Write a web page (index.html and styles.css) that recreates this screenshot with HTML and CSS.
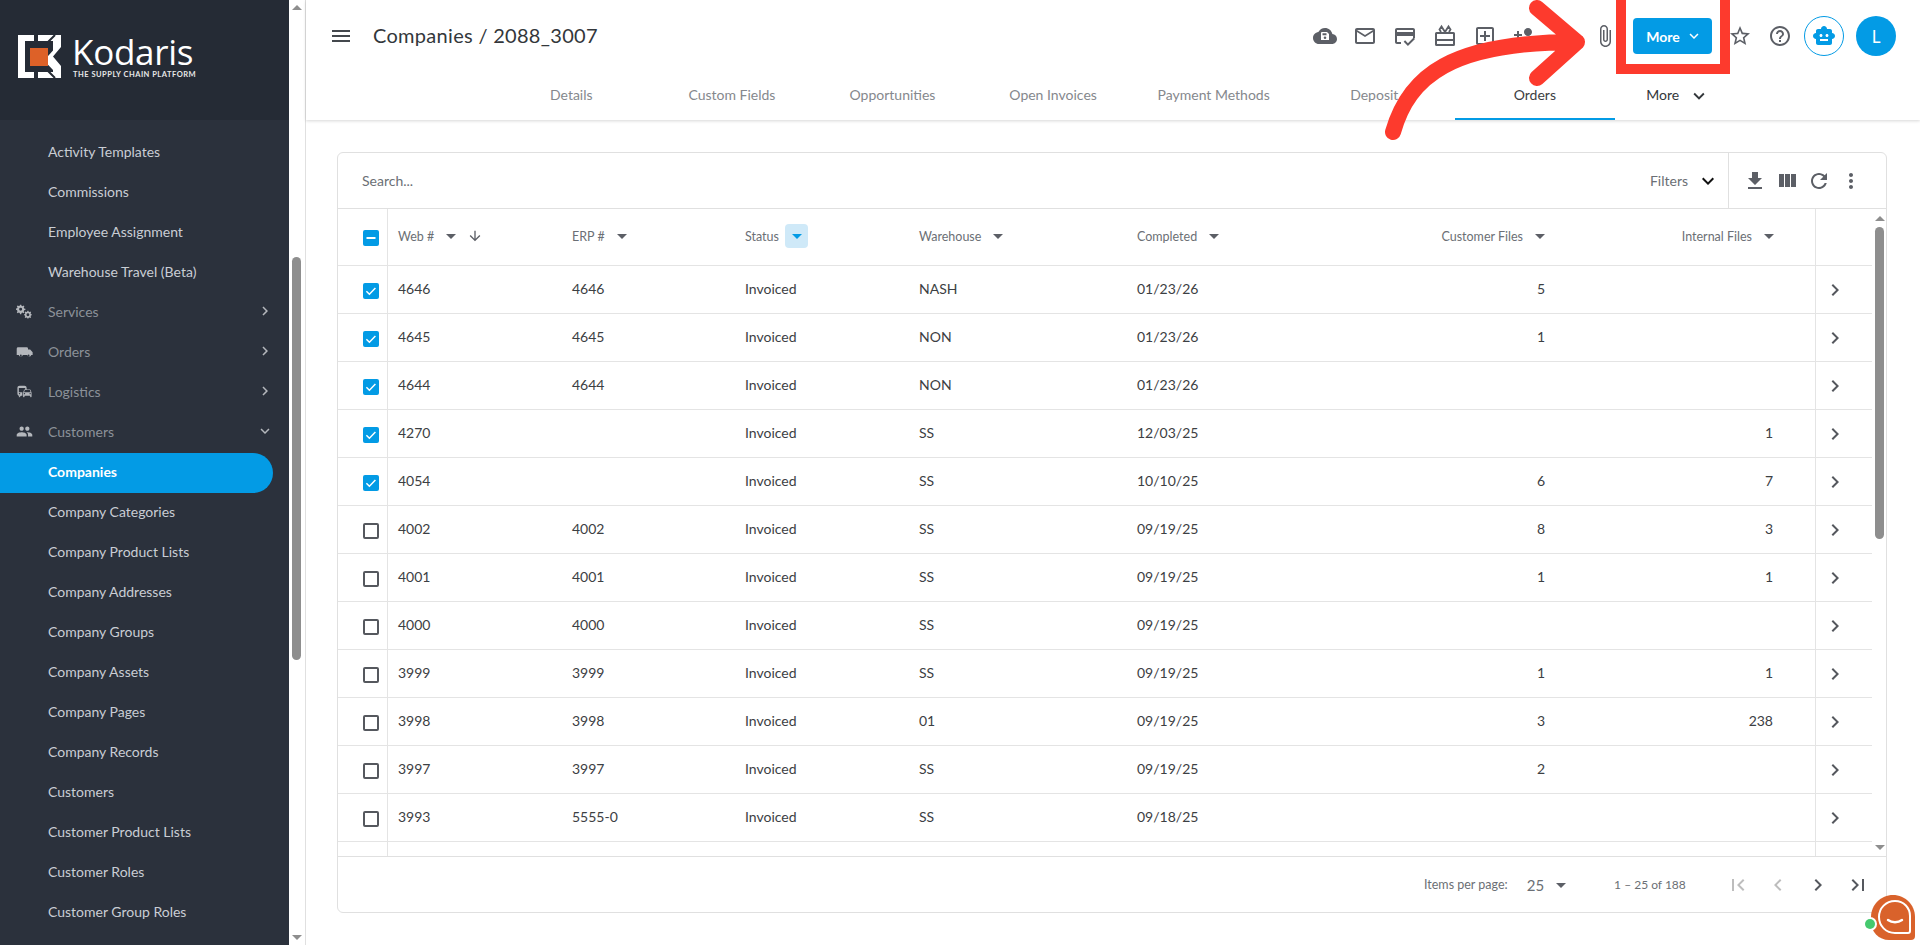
FILE: index.html
```html
<!DOCTYPE html>
<html lang="en">
<head>
    <meta charset="UTF-8">
    <meta name="viewport" content="width=device-width, initial-scale=1.0">
    <title>Companies / 2088_3007</title>
    <link rel="stylesheet" href="styles.css">
</head>
<body>
    <svg class="defs" width="0" height="0">
        <symbol id="i-right" viewBox="0 0 24 24"><path d="M10 6L8.59 7.41 13.17 12l-4.58 4.59L10 18l6-6z"/></symbol>
        <symbol id="i-down" viewBox="0 0 24 24"><path d="M16.59 8.59L12 13.17 7.41 8.59 6 10l6 6 6-6z"/></symbol>
        <symbol id="i-drop" viewBox="0 0 24 24"><path d="M7 10l5 5 5-5z"/></symbol>
        <symbol id="i-check" viewBox="0 0 16 16"><rect width="16" height="16" rx="2"/><path d="M3.4 8.2l3 3 6-6.2" fill="none" stroke="#fff" stroke-width="1.5"/></symbol>
    </svg>

    <div class="container">
        <div class="sidebar">
            <div class="logo">
                <svg class="logo-mark" viewBox="0 0 43 43">
                    <path fill="#fff" d="M0 0h16v6H7v31h9v6H0z"/>
                    <path fill="#fff" d="M20 0h23v12l-8 9.500 8 9.500v12H20v-6h15v-2l-9-9.500 9-10V6H20z"/>
                    <path fill="none" stroke="#252b35" stroke-width="2" d="M37 0l-7 7M37 43l-7-7"/>
                    <rect x="12" y="13" width="18" height="18" fill="#dd6128"/>
                </svg>
                <div class="logo-text">
                    <div class="logo-name">Kodaris</div>
                    <div class="logo-tag">THE SUPPLY CHAIN PLATFORM</div>
                </div>
            </div>
            <ul class="nav">
                <li class="nav-item">Activity Templates</li>
                <li class="nav-item">Commissions</li>
                <li class="nav-item">Employee Assignment</li>
                <li class="nav-item">Warehouse Travel (Beta)</li>
                <li class="nav-item nav-group">
                    <svg class="nav-icon" viewBox="0 0 24 24"><path d="M9.5 3l.5 2.2 1.6.7 2-1.2 1.6 1.6-1.2 2 .7 1.6 2.300.6v2.200l-2.300.5-.7 1.700 1.200 2-1.600 1.600-2-1.200-1.600.7-.5 2.200H7.300l-.5-2.200-1.700-.7-2 1.200-1.600-1.600 1.200-2-.7-1.700L0 12.300v-2.200l2-.6.7-1.600-1.200-2 1.600-1.600 2 1.200 1.700-.7L7.300 3zm-1.100 5.500a2.700 2.700 0 100 5.400 2.700 2.700 0 000-5.400z" transform="scale(.78)"/><path d="M18 13l.4 1.500 1.200.5 1.300-.8 1.200 1.200-.8 1.300.5 1.200 1.200.4v1.600l-1.200.4-.5 1.200.8 1.300-1.200 1.200-1.300-.8-1.200.5-.4 1.200h-1.600l-.4-1.200-1.200-.5-1.300.8-1.200-1.200.8-1.300-.5-1.200-1.200-.4v-1.600l1.200-.4.5-1.200-.8-1.300 1.200-1.200 1.300.8 1.200-.5.400-1.500zm-.8 4a2.200 2.200 0 100 4.400 2.200 2.200 0 000-4.400z" transform="translate(1 -1) scale(.92)"/></svg>
                    <span class="nav-label">Services</span>
                    <svg class="nav-arrow"><use href="#i-right"/></svg>
                </li>
                <li class="nav-item nav-group">
                    <svg class="nav-icon" viewBox="0 0 24 24"><path d="M3 6h12a2 2 0 012 2v1h3l3.500 4v4h-2a3 3 0 01-5.800 0H9.700a3 3 0 01-5.800 0H1V8a2 2 0 012-2zm3.800 12.800a1.300 1.300 0 100-2.600 1.300 1.300 0 000 2.600zm11 0a1.300 1.300 0 100-2.600 1.300 1.300 0 000 2.600z"/></svg>
                    <span class="nav-label">Orders</span>
                    <svg class="nav-arrow"><use href="#i-right"/></svg>
                </li>
                <li class="nav-item nav-group">
                    <svg class="nav-icon" viewBox="0 0 24 24"><path d="M12 4H5C3.340 4 2 5.340 2 7v8c0 1.660 1.340 3 3 3l-1 1v1h1l2-2h2v-5H4V6.990L13 7v2h2V7c0-1.660-1.340-3-3-3zM5 14c.55 0 1 .45 1 1s-.45 1-1 1-1-.45-1-1 .45-1 1-1zm15.570-4.340c-.14-.4-.52-.66-.97-.66h-7.190c-.46 0-.83.26-.98.66L10 13.770l.01 5.510c0 .38.31.72.69.72h.62c.38 0 .68-.38.68-.76V18h8v1.240c0 .38.31.76.69.76h.61c.38 0 .69-.34.69-.72l.01-1.370v-4.140l-1.430-4.070zm-8.160.34h7.190l1.030 3h-9.250l1.030-3zM12 16c-.55 0-1-.45-1-1s.45-1 1-1 1 .45 1 1-.45 1-1 1zm8 0c-.55 0-1-.45-1-1s.45-1 1-1 1 .45 1 1-.45 1-1 1z"/></svg>
                    <span class="nav-label">Logistics</span>
                    <svg class="nav-arrow"><use href="#i-right"/></svg>
                </li>
                <li class="nav-item nav-group">
                    <svg class="nav-icon" viewBox="0 0 24 24"><path d="M16 11c1.660 0 2.990-1.340 2.990-3S17.660 5 16 5c-1.660 0-3 1.340-3 3s1.340 3 3 3zm-8 0c1.660 0 2.990-1.340 2.990-3S9.660 5 8 5C6.340 5 5 6.340 5 8s1.340 3 3 3zm0 2c-2.330 0-7 1.170-7 3.500V19h14v-2.500c0-2.330-4.670-3.500-7-3.500zm8 0c-.29 0-.62.02-.97.05 1.160.84 1.970 1.970 1.970 3.450V19h6v-2.500c0-2.330-4.670-3.500-7-3.500z"/></svg>
                    <span class="nav-label">Customers</span>
                    <svg class="nav-arrow"><use href="#i-down"/></svg>
                </li>
                <li class="nav-item active">Companies</li>
                <li class="nav-item">Company Categories</li>
                <li class="nav-item">Company Product Lists</li>
                <li class="nav-item">Company Addresses</li>
                <li class="nav-item">Company Groups</li>
                <li class="nav-item">Company Assets</li>
                <li class="nav-item">Company Pages</li>
                <li class="nav-item">Company Records</li>
                <li class="nav-item">Customers</li>
                <li class="nav-item">Customer Product Lists</li>
                <li class="nav-item">Customer Roles</li>
                <li class="nav-item">Customer Group Roles</li>
            </ul>
        </div>

        <div class="side-scroll">
            <span class="tri tri-up"></span>
            <div class="side-track"><div class="side-thumb"></div></div>
            <span class="tri tri-down"></span>
        </div>

        <div class="main">
            <div class="header">
                <div class="topbar">
                    <svg class="menu-icon" viewBox="0 0 24 24"><path d="M3 18h18v-2H3v2zm0-5h18v-2H3v2zm0-7v2h18V6H3z"/></svg>
                    <h1 class="title">Companies / 2088_3007</h1>
                    <div class="actions">
                        <span class="action"><svg viewBox="0 0 24 24"><path d="M19.350 10.040C18.670 6.590 15.640 4 12 4 9.110 4 6.600 5.640 5.350 8.040 2.340 8.360 0 10.910 0 14c0 3.310 2.690 6 6 6h13c2.760 0 5-2.240 5-5 0-2.640-2.050-4.780-4.650-4.960z"/><path fill="#fff" d="M9 8h5l2 2v6H8V9a1 1 0 011-1zm.5 1.300v2h4v-2zM12 12.500a1.300 1.300 0 100 2.600 1.300 1.300 0 000-2.600z"/></svg></span>
                        <span class="action"><svg viewBox="0 0 24 24"><path d="M20 4H4c-1.100 0-2 .9-2 2v12c0 1.100.9 2 2 2h16c1.100 0 2-.9 2-2V6c0-1.100-.9-2-2-2zm0 14H4V8l8 5 8-5v10zm-8-7L4 6h16l-8 5z"/></svg></span>
                        <span class="action"><svg viewBox="0 0 24 24"><path d="M20 4H4c-1.110 0-2 .89-2 2v12c0 1.110.89 2 2 2h4v-2H4v-6h16v2h2V6c0-1.110-.89-2-2-2zm0 4H4V6h16v2zm-5.070 11.170l-2.830-2.830-1.410 1.410L14.930 22 22 14.930l-1.410-1.410-5.660 5.650z"/></svg></span>
                        <span class="action"><svg viewBox="0 0 24 24"><path d="M3.500 8h17A1.500 1.500 0 0122 9.500v11a1.500 1.500 0 01-1.500 1.500h-17A1.500 1.500 0 012 20.500v-11A1.500 1.500 0 013.500 8zM4 10v5h16v-5zm0 7v3h16v-3z"/><path fill="none" stroke="currentColor" stroke-width="1.800" d="M12 8L8.500 2.500 6.500 5.500 8 8m4 0l3.500-5.500 2 3L16 8"/></svg></span>
                        <span class="action"><svg viewBox="0 0 24 24"><path d="M19 3H5c-1.110 0-2 .9-2 2v14c0 1.100.89 2 2 2h14c1.100 0 2-.9 2-2V5c0-1.100-.9-2-2-2zm0 16H5V5h14v14zm-8-2h2v-4h4v-2h-4V7h-2v4H7v2h4z"/></svg></span>
                        <span class="action"><svg viewBox="0 0 24 24"><path d="M15 12c2.210 0 4-1.790 4-4s-1.790-4-4-4-4 1.790-4 4 1.790 4 4 4zm-9-2V7H4v3H1v2h3v3h2v-3h3v-2H6zm9 4c-2.670 0-8 1.340-8 4v2h16v-2c0-2.660-5.330-4-8-4z"/></svg></span>
                        <span class="action"></span>
                        <span class="action"><svg viewBox="0 0 24 24"><path d="M16.500 6v11.500c0 2.210-1.790 4-4 4s-4-1.790-4-4V5c0-1.380 1.120-2.500 2.500-2.500s2.500 1.120 2.500 2.500v10.500c0 .55-.45 1-1 1s-1-.45-1-1V6H10v9.500c0 1.380 1.120 2.500 2.500 2.500s2.500-1.120 2.500-2.500V5c0-2.210-1.790-4-4-4S7 2.790 7 5v12.500c0 3.040 2.460 5.500 5.500 5.500s5.500-2.460 5.500-5.500V6h-1.500z"/></svg></span>
                        <button class="btn-more">More <svg><use href="#i-down"/></svg></button>
                        <span class="action action-star"><svg viewBox="0 0 24 24"><path d="M22 9.240l-7.190-.62L12 2 9.190 8.630 2 9.240l5.460 4.730L5.820 21 12 17.270 18.180 21l-1.630-7.030L22 9.240zM12 15.400l-3.760 2.270 1-4.280-3.320-2.880 4.380-.38L12 6.100l1.710 4.040 4.380.38-3.320 2.880 1 4.280L12 15.400z"/></svg></span>
                        <span class="action"><svg viewBox="0 0 24 24"><path d="M11 18h2v-2h-2v2zm1-16C6.480 2 2 6.480 2 12s4.480 10 10 10 10-4.480 10-10S17.520 2 12 2zm0 18c-4.410 0-8-3.590-8-8s3.590-8 8-8 8 3.590 8 8-3.590 8-8 8zm0-14c-2.210 0-4 1.790-4 4h2c0-1.100.9-2 2-2s2 .9 2 2c0 2-3 1.750-3 5h2c0-2.250 3-2.500 3-5 0-2.210-1.790-4-4-4z"/></svg></span>
                        <span class="robot"><svg viewBox="0 0 24 24"><path d="M20 9V7c0-1.100-.9-2-2-2h-3c0-1.660-1.340-3-3-3S9 3.340 9 5H6c-1.100 0-2 .9-2 2v2c-1.660 0-3 1.340-3 3s1.340 3 3 3v4c0 1.100.9 2 2 2h12c1.100 0 2-.9 2-2v-4c1.660 0 3-1.340 3-3s-1.340-3-3-3zM7.500 11.500C7.500 10.670 8.170 10 9 10s1.500.67 1.500 1.500S9.830 13 9 13s-1.500-.67-1.500-1.500zM16 17H8v-2h8v2zm-1-4c-.83 0-1.500-.67-1.500-1.500S14.170 10 15 10s1.500.67 1.500 1.500S15.830 13 15 13z"/></svg></span>
                        <span class="avatar">L</span>
                    </div>
                </div>
                <div class="tabs">
                    <div class="tab">Details</div>
                    <div class="tab">Custom Fields</div>
                    <div class="tab">Opportunities</div>
                    <div class="tab">Open Invoices</div>
                    <div class="tab">Payment Methods</div>
                    <div class="tab">Deposit</div>
                    <div class="tab tab-active">Orders</div>
                    <div class="tab tab-more">More <svg><use href="#i-down"/></svg></div>
                </div>
            </div>

            <div class="content">
                <div class="card">
                    <div class="toolbar">
                        <div class="search">Search...</div>
                        <div class="filters">Filters <svg><use href="#i-down"/></svg></div>
                        <div class="tools">
                            <svg viewBox="0 0 24 24"><path d="M19 9h-4V3H9v6H5l7 7 7-7zM5 18v2h14v-2H5z"/></svg>
                            <svg viewBox="0 0 24 24"><path d="M10 18h5V5h-5v13zm-6 0h5V5H4v13zM16 5v13h5V5h-5z"/></svg>
                            <svg viewBox="0 0 24 24"><path d="M17.650 6.350C16.200 4.900 14.210 4 12 4c-4.420 0-7.990 3.580-7.990 8s3.570 8 7.990 8c3.730 0 6.840-2.550 7.730-6h-2.080c-.82 2.330-3.040 4-5.650 4-3.310 0-6-2.690-6-6s2.690-6 6-6c1.660 0 3.140.69 4.220 1.780L13 11h7V4l-2.350 2.350z"/></svg>
                            <svg viewBox="0 0 24 24"><path d="M12 8c1.100 0 2-.9 2-2s-.9-2-2-2-2 .9-2 2 .9 2 2 2zm0 2c-1.100 0-2 .9-2 2s.9 2 2 2 2-.9 2-2-.9-2-2-2zm0 6c-1.100 0-2 .9-2 2s.9 2 2 2 2-.9 2-2-.9-2-2-2z"/></svg>
                        </div>
                    </div>

                    <div class="table-wrap">
                        <div class="table">
                            <div class="row row-head">
                                <div class="cell cell-check"><svg class="box"><rect width="16" height="16" rx="2"/><rect x="3.500" y="7" width="9" height="2" fill="#fff"/></svg></div>
                                <div class="cell">Web # <svg class="caret"><use href="#i-drop"/></svg><svg class="sort" viewBox="0 0 24 24"><path d="M20 12l-1.410-1.410L13 16.170V4h-2v12.170l-5.580-5.590L4 12l8 8 8-8z"/></svg></div>
                                <div class="cell">ERP # <svg class="caret"><use href="#i-drop"/></svg></div>
                                <div class="cell">Status <span class="caret-on"><svg class="caret"><use href="#i-drop"/></svg></span></div>
                                <div class="cell">Warehouse <svg class="caret"><use href="#i-drop"/></svg></div>
                                <div class="cell">Completed <svg class="caret"><use href="#i-drop"/></svg></div>
                                <div class="cell num head-cust">Customer Files <svg class="caret"><use href="#i-drop"/></svg></div>
                                <div class="cell num head-int">Internal Files <svg class="caret"><use href="#i-drop"/></svg></div>
                                <div class="cell cell-go"></div>
                            </div>

                            <div class="row">
                                <div class="cell cell-check"><svg class="box"><use href="#i-check"/></svg></div>
                                <div class="cell">4646</div><div class="cell">4646</div><div class="cell">Invoiced</div><div class="cell">NASH</div><div class="cell">01/23/26</div>
                                <div class="cell num cust">5</div><div class="cell num int"></div>
                                <div class="cell cell-go"><svg><use href="#i-right"/></svg></div>
                            </div>
                            <div class="row">
                                <div class="cell cell-check"><svg class="box"><use href="#i-check"/></svg></div>
                                <div class="cell">4645</div><div class="cell">4645</div><div class="cell">Invoiced</div><div class="cell">NON</div><div class="cell">01/23/26</div>
                                <div class="cell num cust">1</div><div class="cell num int"></div>
                                <div class="cell cell-go"><svg><use href="#i-right"/></svg></div>
                            </div>
                            <div class="row">
                                <div class="cell cell-check"><svg class="box"><use href="#i-check"/></svg></div>
                                <div class="cell">4644</div><div class="cell">4644</div><div class="cell">Invoiced</div><div class="cell">NON</div><div class="cell">01/23/26</div>
                                <div class="cell num cust"></div><div class="cell num int"></div>
                                <div class="cell cell-go"><svg><use href="#i-right"/></svg></div>
                            </div>
                            <div class="row">
                                <div class="cell cell-check"><svg class="box"><use href="#i-check"/></svg></div>
                                <div class="cell">4270</div><div class="cell"></div><div class="cell">Invoiced</div><div class="cell">SS</div><div class="cell">12/03/25</div>
                                <div class="cell num cust"></div><div class="cell num int">1</div>
                                <div class="cell cell-go"><svg><use href="#i-right"/></svg></div>
                            </div>
                            <div class="row">
                                <div class="cell cell-check"><svg class="box"><use href="#i-check"/></svg></div>
                                <div class="cell">4054</div><div class="cell"></div><div class="cell">Invoiced</div><div class="cell">SS</div><div class="cell">10/10/25</div>
                                <div class="cell num cust">6</div><div class="cell num int">7</div>
                                <div class="cell cell-go"><svg><use href="#i-right"/></svg></div>
                            </div>
                            <div class="row">
                                <div class="cell cell-check"><span class="box-empty"></span></div>
                                <div class="cell">4002</div><div class="cell">4002</div><div class="cell">Invoiced</div><div class="cell">SS</div><div class="cell">09/19/25</div>
                                <div class="cell num cust">8</div><div class="cell num int">3</div>
                                <div class="cell cell-go"><svg><use href="#i-right"/></svg></div>
                            </div>
                            <div class="row">
                                <div class="cell cell-check"><span class="box-empty"></span></div>
                                <div class="cell">4001</div><div class="cell">4001</div><div class="cell">Invoiced</div><div class="cell">SS</div><div class="cell">09/19/25</div>
                                <div class="cell num cust">1</div><div class="cell num int">1</div>
                                <div class="cell cell-go"><svg><use href="#i-right"/></svg></div>
                            </div>
                            <div class="row">
                                <div class="cell cell-check"><span class="box-empty"></span></div>
                                <div class="cell">4000</div><div class="cell">4000</div><div class="cell">Invoiced</div><div class="cell">SS</div><div class="cell">09/19/25</div>
                                <div class="cell num cust"></div><div class="cell num int"></div>
                                <div class="cell cell-go"><svg><use href="#i-right"/></svg></div>
                            </div>
                            <div class="row">
                                <div class="cell cell-check"><span class="box-empty"></span></div>
                                <div class="cell">3999</div><div class="cell">3999</div><div class="cell">Invoiced</div><div class="cell">SS</div><div class="cell">09/19/25</div>
                                <div class="cell num cust">1</div><div class="cell num int">1</div>
                                <div class="cell cell-go"><svg><use href="#i-right"/></svg></div>
                            </div>
                            <div class="row">
                                <div class="cell cell-check"><span class="box-empty"></span></div>
                                <div class="cell">3998</div><div class="cell">3998</div><div class="cell">Invoiced</div><div class="cell">01</div><div class="cell">09/19/25</div>
                                <div class="cell num cust">3</div><div class="cell num int">238</div>
                                <div class="cell cell-go"><svg><use href="#i-right"/></svg></div>
                            </div>
                            <div class="row">
                                <div class="cell cell-check"><span class="box-empty"></span></div>
                                <div class="cell">3997</div><div class="cell">3997</div><div class="cell">Invoiced</div><div class="cell">SS</div><div class="cell">09/19/25</div>
                                <div class="cell num cust">2</div><div class="cell num int"></div>
                                <div class="cell cell-go"><svg><use href="#i-right"/></svg></div>
                            </div>
                            <div class="row">
                                <div class="cell cell-check"><span class="box-empty"></span></div>
                                <div class="cell">3993</div><div class="cell">5555-0</div><div class="cell">Invoiced</div><div class="cell">SS</div><div class="cell">09/18/25</div>
                                <div class="cell num cust"></div><div class="cell num int"></div>
                                <div class="cell cell-go"><svg><use href="#i-right"/></svg></div>
                            </div>
                            <div class="row row-rest">
                                <div class="cell cell-check"></div>
                                <div class="cell"></div><div class="cell"></div><div class="cell"></div><div class="cell"></div><div class="cell"></div><div class="cell"></div><div class="cell"></div>
                                <div class="cell cell-go"></div>
                            </div>
                        </div>
                        <div class="table-scroll">
                            <span class="tri tri-up"></span>
                            <div class="table-track"><div class="table-thumb"></div></div>
                            <span class="tri tri-down"></span>
                        </div>
                    </div>

                    <div class="pager">
                        <span class="pager-label">Items per page:</span>
                        <span class="pager-size">25 <svg><use href="#i-drop"/></svg></span>
                        <span class="pager-range">1 – 25 of 188</span>
                        <div class="pager-btns">
                            <svg class="off" viewBox="0 0 24 24"><path d="M18.410 16.590L13.820 12l4.590-4.590L17 6l-6 6 6 6zM6 6h2v12H6z"/></svg>
                            <svg class="off" viewBox="0 0 24 24"><path d="M15.410 7.410L14 6l-6 6 6 6 1.410-1.410L10.830 12z"/></svg>
                            <svg viewBox="0 0 24 24"><path d="M10 6L8.590 7.410 13.170 12l-4.580 4.590L10 18l6-6z"/></svg>
                            <svg viewBox="0 0 24 24"><path d="M5.590 7.410L10.180 12l-4.590 4.590L7 18l6-6-6-6zM16 6h2v12h-2z"/></svg>
                        </div>
                    </div>
                </div>
            </div>
        </div>
    </div>

    <!-- tutorial annotation drawn over the page -->
    <div class="mark-box"></div>
    <svg class="mark-arrow" viewBox="0 0 200 140">
        <path d="M8 132C24 76 66 42 192 42M152 8l40 34-40 36" fill="none" stroke="#fd3a2d" stroke-width="16" stroke-linecap="round" stroke-linejoin="round"/>
    </svg>

    <!-- chat widget -->
    <div class="chat">
        <svg viewBox="0 0 44 45"><path fill="#d9622b" d="M22 0C9.800 0 0 9.800 0 22v5c0 10 8 18 18 18h22a4 4 0 004-4V22C44 9.800 34.200 0 22 0z"/><path fill="none" stroke="#fff" stroke-width="2" d="M24 6C15 6 8 13 8 22s7 16 16 16h13a2 2 0 002-2V21C39 13 33 6 24 6z"/><path fill="none" stroke="#fff" stroke-width="2.400" stroke-linecap="round" d="M17 25c4 3 10 3 14 0"/></svg>
        <span class="chat-dot"></span>
    </div>
</body>
</html>
```

FILE: styles.css
```css
* {
    box-sizing: border-box;
}

body {
    margin: 0;
    height: 945px;
    overflow: hidden;
    font-family: 'Lato', 'Noto Sans', sans-serif;
    font-size: 14px;
    color: #3c4043;
    background-color: #fff;
}

.defs {
    position: absolute;
}

svg {
    fill: currentColor;
    display: block;
}

.container {
    display: flex;
    height: 945px;
}

/* sidebar */
.sidebar {
    width: 289px;
    flex: none;
    height: 945px;
    overflow: hidden;
    background-color: #2b313c;
}

.logo {
    height: 120px;
    padding: 35px 0 0 18px;
    display: flex;
    gap: 11px;
    background-color: #252b35;
}

.logo-mark {
    width: 43px;
    height: 43px;
}

.logo-name {
    font-family: 'Open Sans', sans-serif;
    font-size: 35px;
    font-weight: 500;
    line-height: 34px;
    letter-spacing: -.3px;
    color: #fff;
}

.logo-tag {
    font-size: 7.5px;
    font-weight: 700;
    letter-spacing: .5px;
    line-height: 8px;
    color: #e8e8e8;
    margin-top: 2px;
    margin-left: 1px;
}

.nav {
    list-style: none;
    margin: 0;
    padding: 13px 0 0;
}

.nav-item {
    height: 40px;
    display: flex;
    align-items: center;
    padding: 0 0 4px 48px;
    width: 273px;
    color: #c9cdd4;
    font-size: 14px;
}

.nav-group {
    position: relative;
    color: #8c9199;
}

.nav-icon {
    position: absolute;
    left: 16px;
    width: 17px;
    height: 17px;
    color: #b4b7bc;
}

.nav-label {
    flex: 1;
}

.nav-arrow {
    width: 18px;
    height: 18px;
    color: #b4b7bc;
    margin-right: -1px;
}

.nav-item.active {
    background-color: #039be5;
    color: #fff;
    font-weight: 700;
    border-radius: 0 20px 20px 0;
}

.side-scroll {
    width: 17px;
    flex: none;
    border-right: 1px solid #e0e0e0;
    display: flex;
    flex-direction: column;
    align-items: center;
    padding: 5px 0;
    background-color: #fff;
}

.side-track {
    flex: 1;
    width: 100%;
    padding: 247px 3px 0;
    margin-top: 0;
}

.side-thumb {
    height: 403px;
    width: 9px;
    border-radius: 5px;
    background-color: #8e8e8e;
}

.tri {
    width: 0;
    height: 0;
    flex: none;
    border-left: 5px solid transparent;
    border-right: 5px solid transparent;
}

.tri-up {
    border-bottom: 5px solid #8e8e8e;
}

.tri-down {
    border-top: 5px solid #8e8e8e;
}

/* main */
.main {
    flex: 1;
    min-width: 0;
}

.header {
    height: 120px;
    box-shadow: 0 1px 3px rgba(0,0,0,0.16);
}

.topbar {
    height: 72px;
    display: flex;
    align-items: center;
    padding: 0 24px 0 23px;
}

.menu-icon {
    width: 24px;
    height: 24px;
    color: #44484d;
}

.title {
    margin: 0 0 0 20px;
    padding-bottom: 2px;
    font-size: 20px;
    font-weight: 400;
    color: #33373b;
    letter-spacing: .3px;
}

.actions {
    margin-left: auto;
    display: flex;
    align-items: center;
}

.action {
    width: 40px;
    height: 40px;
    display: flex;
    align-items: center;
    justify-content: center;
    color: #5c5f66;
}

.action svg {
    width: 24px;
    height: 24px;
}

.action-star {
    margin-left: 8px;
}

.btn-more {
    margin-left: 8px;
    width: 79px;
    height: 36px;
    border: none;
    border-radius: 4px;
    background-color: #039be5;
    color: #fff;
    font: 700 14px 'Lato', sans-serif;
    display: flex;
    align-items: center;
    justify-content: center;
    gap: 5px;
    padding: 0 0 0 4px;
}

.btn-more svg {
    width: 18px;
    height: 18px;
}

.robot {
    width: 40px;
    height: 40px;
    margin-left: 4px;
    border: 1px solid #039be5;
    border-radius: 50%;
    display: flex;
    align-items: center;
    justify-content: center;
    color: #039be5;
}

.robot svg {
    width: 24px;
    height: 24px;
}

.avatar {
    width: 40px;
    height: 40px;
    margin-left: 12px;
    border-radius: 50%;
    background-color: #039be5;
    color: #fff;
    font-size: 17px;
    display: flex;
    align-items: center;
    justify-content: center;
}

.tabs {
    height: 48px;
    display: flex;
    padding-left: 185px;
}

.tab {
    width: 160.6px;
    display: flex;
    align-items: center;
    justify-content: center;
    color: #85888d;
    font-size: 14px;
    padding-bottom: 3px;
}

.tab-active {
    color: #3c4043;
    border-bottom: 2px solid #039be5;
    padding-bottom: 1px;
}

.tab-more {
    color: #33373b;
    width: 124px;
    gap: 9px;
    padding-left: 2px;
}

.tab-more svg {
    width: 22px;
    height: 22px;
    margin-top: 3px;
}

.content {
    padding: 32px 33px 0 31px;
}

.card {
    height: 761px;
    border: 1px solid #e0e0e0;
    border-radius: 6px;
    display: flex;
    flex-direction: column;
}

.toolbar {
    height: 56px;
    display: flex;
    align-items: center;
    flex: none;
    border-bottom: 1px solid #e0e0e0;
}

.search {
    flex: 1;
    padding-left: 24px;
    color: #6b6f75;
}

.filters {
    display: flex;
    align-items: center;
    gap: 8px;
    padding-right: 8px;
    color: #6b6f75;
    height: 100%;
    border-right: 1px solid #e0e0e0;
}

.filters svg {
    width: 24px;
    height: 24px;
    color: #111;
}

.tools {
    width: 157px;
    display: flex;
    align-items: center;
    padding-left: 14px;
    gap: 8px;
    color: #5c5f66;
}

.tools svg {
    width: 24px;
    height: 24px;
}

.table-wrap {
    flex: 1;
    display: flex;
    min-height: 0;
}

.table {
    width: 1534px;
    flex: none;
}

.row {
    display: grid;
    grid-template-columns: 50px 174px 173px 174px 218px 213px 220px 255px 57px;
    height: 48px;
    border-bottom: 1px solid #e4e4e4;
}

.row-head {
    height: 57px;
    font-size: 12.5px;
    color: #6b6f75;
}

.row-rest {
    height: 14px;
    border-bottom: none;
}

.cell {
    display: flex;
    align-items: center;
    padding: 0 10px 2px;
}

.num {
    justify-content: flex-end;
}

.cust {
    padding-right: 15px;
}

.int {
    padding-right: 42px;
}

.head-cust {
    padding-right: 8px;
}

.head-int {
    padding-right: 34px;
}

.cell-check {
    border-right: 1px solid #e4e4e4;
    padding: 2px 0 0 25px;
}

.box {
    width: 16px;
    height: 16px;
    color: #039be5;
}

.box-empty {
    width: 16px;
    height: 16px;
    border: 2px solid #55585e;
    border-radius: 2px;
}

.caret {
    width: 24px;
    height: 24px;
    margin-left: 5px;
    color: #5c5f66;
    flex: none;
}

.sort {
    width: 16px;
    height: 16px;
    color: #5c5f66;
    margin-left: 4px;
}

.caret-on {
    width: 23px;
    height: 24px;
    margin-left: 6px;
    border-radius: 4px;
    background-color: #cfe9f8;
    color: #039be5;
}

.caret-on .caret {
    margin-left: 0;
    color: #039be5;
}

.cell-go {
    border-left: 1px solid #e4e4e4;
    padding: 2px 0 2px 7px;
    color: #55585e;
}

.cell-go svg {
    width: 24px;
    height: 24px;
}

.table-scroll {
    flex: 1;
    display: flex;
    flex-direction: column;
    align-items: center;
    padding: 7px 0 6px;
}

.table-track {
    flex: 1;
    width: 100%;
    padding: 6px 3px 0;
}

.table-thumb {
    width: 9px;
    height: 312px;
    border-radius: 5px;
    background-color: #8e8e8e;
}

.pager {
    height: 56px;
    flex: none;
    border-top: 1px solid #e0e0e0;
    display: flex;
    align-items: center;
    font-size: 12.5px;
    color: #6b6f75;
}

.pager-label {
    margin-left: 1086px;
}

.pager-size {
    margin-left: 19px;
    font-size: 15px;
    display: flex;
    align-items: center;
    gap: 5px;
}

.pager-size svg {
    width: 24px;
    height: 24px;
    color: #5c5f66;
}

.pager-range {
    margin-left: 41px;
    font-size: 12px;
}

.pager-btns {
    margin-left: 40px;
    display: flex;
    gap: 16px;
    color: #55585e;
}

.pager-btns svg {
    width: 24px;
    height: 24px;
}

.pager-btns .off {
    color: #bdbdbd;
}

/* overlays */
.mark-box {
    position: absolute;
    left: 1616px;
    top: -10px;
    width: 114px;
    height: 84px;
    border: 10px solid #fd3a2d;
}

.mark-arrow {
    position: absolute;
    left: 1385px;
    top: 0;
    width: 200px;
    height: 140px;
    overflow: visible;
}

.chat {
    position: absolute;
    left: 1871px;
    top: 895px;
    width: 44px;
    height: 45px;
}

.chat-dot {
    position: absolute;
    left: -6px;
    top: 24px;
    width: 10px;
    height: 10px;
    border-radius: 50%;
    background-color: #45c96e;
    box-shadow: 0 0 0 2px #fff;
}
```
